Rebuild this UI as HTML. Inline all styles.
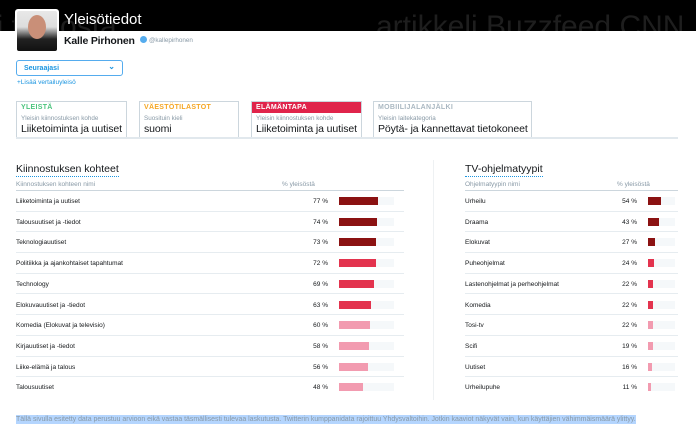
<!DOCTYPE html>
<html><head><meta charset="utf-8"><style>
*{margin:0;padding:0;box-sizing:border-box}
body{width:696px;height:444px;overflow:hidden;background:#fff;font-family:"Liberation Sans",Arial,sans-serif;color:#14171a;position:relative}
.hdr{position:absolute;left:0;top:0;width:696px;height:31px;background:#000;overflow:hidden}
.ghost{position:absolute;top:10px;font-size:30px;color:#1e1e1e;white-space:nowrap}
.av{position:absolute;left:15px;top:9px;width:44px;height:44px;background:#fff;border-radius:3px;padding:2px}
.av div{width:100%;height:100%;background:linear-gradient(#e8e8e8 0,#ddd 40%,#222 70%,#111 100%);position:relative;border-radius:2px;overflow:hidden}
.av div:after{content:"";position:absolute;left:11px;top:4px;width:18px;height:24px;border-radius:50%;background:#c98f78}
.a{position:absolute;white-space:nowrap}
.card{position:absolute;top:101px;height:37px;border:1px solid #ccd6dd;border-bottom:none;white-space:nowrap;overflow:hidden}
.card .h{font-size:7px;font-weight:bold;letter-spacing:.3px;padding:2px 4px;height:11px}
.card .l{font-size:6.3px;color:#8899a6;padding:0 4px;margin-top:2px}
.card .v{font-size:10.5px;padding:0 4px;margin-top:1px;letter-spacing:-.1px}
.row{position:absolute;height:20.7px;border-bottom:1px solid #e6ecf0;font-size:6.5px;color:#14171a}
.row span{position:absolute;top:7px}
.bar{position:absolute;top:6px;height:8px;background:#f5f8fa}
.bar i{position:absolute;left:0;top:0;height:8px}
</style></head><body>
<div class="hdr">
<div class="ghost" style="left:-10px">ji tiedosta</div>
<div class="ghost" style="left:376px">artikkeli Buzzfeed CNN</div>
<div class="a" style="left:64px;top:11px;font-size:15px;color:#fff">Yleisötiedot</div>
</div>
<div class="av"><div></div></div>
<div class="a" style="left:64px;top:35px;font-size:10.5px;font-weight:bold;letter-spacing:-.2px">Kalle Pirhonen</div>
<div class="a" style="left:140px;top:36px;width:7px;height:7px;border-radius:50%;background:#55acee"></div>
<div class="a" style="left:149px;top:37px;font-size:6.3px;color:#8899a6">@kallepirhonen</div>
<div class="a" style="left:16px;top:60px;width:107px;height:16px;border:1.5px solid #55acee;border-radius:3px;font-size:7px;font-weight:bold;color:#1b95e0;padding:3.5px 7px">Seuraajasi<span style="position:absolute;right:7px;top:1px;font-size:8px">⌄</span></div>
<div class="a" style="left:17px;top:79px;font-size:6.5px;color:#1b95e0">+Lisää vertailuyleisö</div>

<div class="card" style="left:16px;width:111px"><div class="h" style="color:#4cc47e">YLEISTÄ</div><div class="l">Yleisin kiinnostuksen kohde</div><div class="v">Liiketoiminta ja uutiset</div></div>
<div class="card" style="left:139px;width:100px"><div class="h" style="color:#f5a623">VÄESTÖTILASTOT</div><div class="l">Suosituin kieli</div><div class="v">suomi</div></div>
<div class="card" style="left:251px;width:111px"><div class="h" style="color:#fff;background:#e0244b">ELÄMÄNTAPA</div><div class="l">Yleisin kiinnostuksen kohde</div><div class="v">Liiketoiminta ja uutiset</div></div>
<div class="card" style="left:373px;width:159px"><div class="h" style="color:#aab8c2">MOBIILIJALANJÄLKI</div><div class="l">Yleisin laitekategoria</div><div class="v">Pöytä- ja kannettavat tietokoneet</div></div>
<div class="a" style="left:16px;top:137px;width:662px;height:2px;background:#e1e8ed"></div>

<div class="a" style="left:16px;top:163px;font-size:10.5px;border-bottom:1px dotted #1b95e0;padding-bottom:1px">Kiinnostuksen kohteet</div>
<div class="a" style="left:16px;top:181px;font-size:6.5px;color:#8899a6">Kiinnostuksen kohteen nimi</div>
<div class="a" style="left:282px;top:181px;font-size:6.5px;color:#8899a6">% yleisöstä</div>
<div class="a" style="left:16px;top:190px;width:388px;height:1px;background:#ccd6dd"></div>

<div class="a" style="left:433px;top:160px;width:1px;height:240px;background:#eef1f3"></div>
<div class="a" style="left:465px;top:163px;font-size:10.5px;border-bottom:1px dotted #1b95e0;padding-bottom:1px">TV-ohjelmatyypit</div>
<div class="a" style="left:465px;top:181px;font-size:6.5px;color:#8899a6">Ohjelmatyypin nimi</div>
<div class="a" style="left:617px;top:181px;font-size:6.5px;color:#8899a6">% yleisöstä</div>
<div class="a" style="left:465px;top:190px;width:213px;height:1px;background:#ccd6dd"></div>

<div id="L"></div>
<script>
var D='#8b1212',R='#e3334e',P='#f29bb0';
var L=[["Liiketoiminta ja uutiset",77,D],["Talousuutiset ja -tiedot",74,D],["Teknologiauutiset",73,D],["Politiikka ja ajankohtaiset tapahtumat",72,R],["Technology",69,R],["Elokuvauutiset ja -tiedot",63,R],["Komedia (Elokuvat ja televisio)",60,P],["Kirjauutiset ja -tiedot",58,P],["Liike-elämä ja talous",56,P],["Talousuutiset",48,P]];
var Rr=[["Urheilu",54,D],["Draama",43,D],["Elokuvat",27,D],["Puheohjelmat",24,R],["Lastenohjelmat ja perheohjelmat",22,R],["Komedia",22,R],["Tosi-tv",22,P],["Scifi",19,P],["Uutiset",16,P],["Urheilupuhe",11,P]];
var h='';
for(var i=0;i<10;i++){var t=191+i*20.7,last=i==9?'border-bottom:none;':'';
var a=L[i];h+='<div class="row" style="left:16px;width:388px;top:'+t+'px;'+last+'"><span style="left:0">'+a[0]+'</span><span style="right:76px">'+a[1]+' %</span><div class="bar" style="left:323px;width:55px"><i style="width:'+(a[1]*0.51)+'px;background:'+a[2]+'"></i></div></div>';
var b=Rr[i];h+='<div class="row" style="left:465px;width:213px;top:'+t+'px;'+last+'"><span style="left:0">'+b[0]+'</span><span style="right:41px">'+b[1]+' %</span><div class="bar" style="left:183px;width:27px"><i style="width:'+Math.max(1,b[1]*0.245)+'px;background:'+b[2]+'"></i></div></div>';}
document.getElementById('L').innerHTML=h;
</script>
<div class="a" style="left:16px;top:415px;font-size:6.95px;color:#8899a6;background:#b4d5fe;padding:1px 0">Tällä sivulla esitetty data perustuu arvioon eikä vastaa täsmällisesti tulevaa laskutusta. Twitterin kumppanidata rajoittuu Yhdysvaltoihin. Jotkin kaaviot näkyvät vain, kun käyttäjien vähimmäismäärä ylittyy.</div>
</body></html>
